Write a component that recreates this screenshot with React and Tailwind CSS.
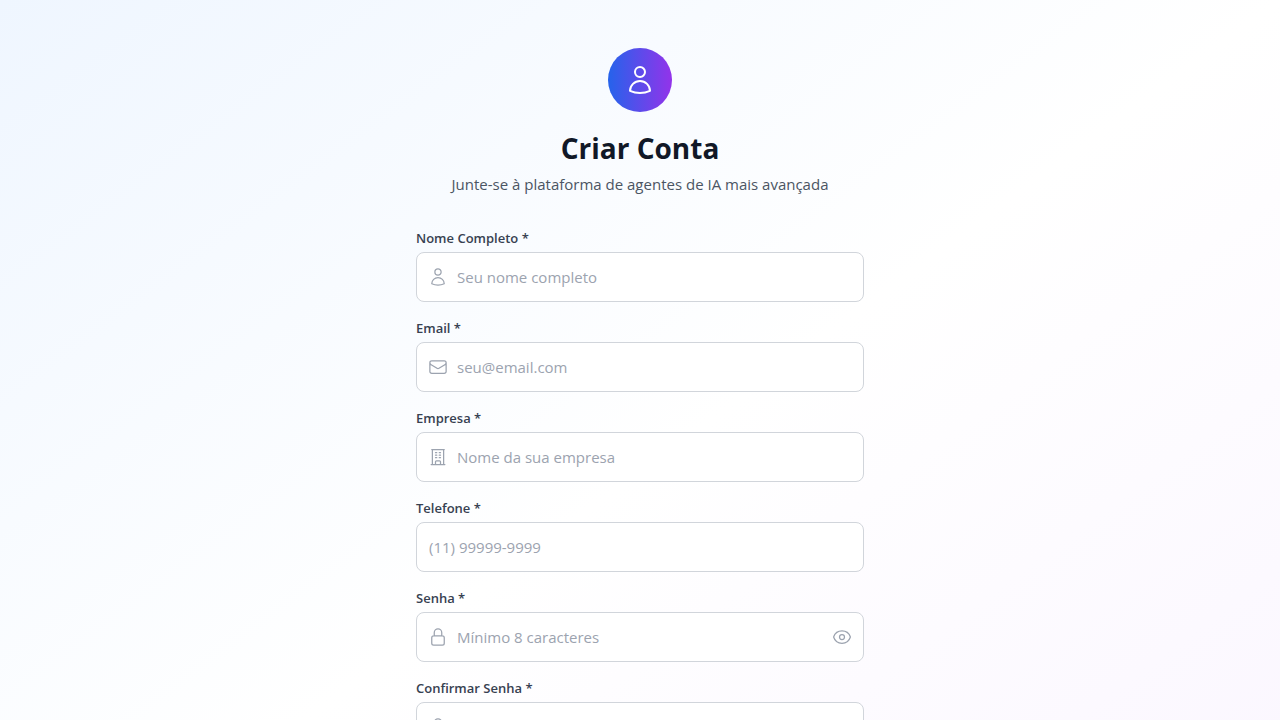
import { useState } from "react";
import {
  HiOutlineBuildingOffice,
  HiOutlineEnvelope,
  HiOutlineEye,
  HiOutlineEyeSlash,
  HiOutlineLockClosed,
  HiOutlineUser,
} from "react-icons/hi2";

function Field({ id, label, icon: Icon, type = "text", placeholder, autoComplete }) {
  const [visible, setVisible] = useState(false);
  const isPassword = type === "password";
  const Toggle = visible ? HiOutlineEyeSlash : HiOutlineEye;

  return (
    <div className="flex flex-col gap-1">
      <label htmlFor={id} className="text-[13px] leading-5 font-semibold text-[#374151]">
        {label} *
      </label>
      <div className="relative flex">
        {Icon && (
          <Icon
            className="pointer-events-none absolute inset-y-0 left-3 my-auto size-5 text-[#9ca3af]"
            aria-hidden="true"
          />
        )}
        <input
          id={id}
          name={id}
          type={isPassword && visible ? "text" : type}
          placeholder={placeholder}
          autoComplete={autoComplete}
          required
          className={`w-full min-w-0 rounded-lg border border-[#d1d5db] bg-white py-3 text-[15px] leading-6 text-[#111827] outline-none placeholder:text-[#9ca3af] focus:border-[#2563eb] ${Icon ? "pl-10" : "pl-3"} ${isPassword ? "pr-10" : "pr-3"}`}
        />
        {isPassword && (
          <button
            type="button"
            onClick={() => setVisible(!visible)}
            aria-label={visible ? "Ocultar senha" : "Mostrar senha"}
            className="absolute inset-y-0 right-3 text-[#9ca3af]"
          >
            <Toggle className="size-5" aria-hidden="true" />
          </button>
        )}
      </div>
    </div>
  );
}

export default function App() {
  return (
    <main className="min-h-screen bg-linear-to-br/srgb from-[#eff6ff] via-white to-[#faf5ff] px-4 pt-12 pb-48 font-['Segoe_UI','Open_Sans',sans-serif]">
      <div className="mx-auto flex w-full max-w-md flex-col gap-8">
        <header className="flex flex-col items-center text-center">
          <div className="mb-4 flex size-16 items-center justify-center rounded-full bg-linear-to-r/srgb from-[#2563eb] to-[#9333ea]">
            <HiOutlineUser className="size-8 text-white" aria-hidden="true" />
          </div>
          <h1 className="mb-1 text-[28px] leading-10 font-bold text-[#111827]">Criar Conta</h1>
          <p className="text-[15px] leading-6 text-[#4b5563]">
            Junte-se à plataforma de agentes de IA mais avançada
          </p>
        </header>

        <form className="flex flex-col gap-4" onSubmit={(event) => event.preventDefault()}>
          <Field id="name" label="Nome Completo" icon={HiOutlineUser} placeholder="Seu nome completo" autoComplete="name" />
          <Field id="email" label="Email" icon={HiOutlineEnvelope} type="email" placeholder="seu@email.com" autoComplete="email" />
          <Field id="company" label="Empresa" icon={HiOutlineBuildingOffice} placeholder="Nome da sua empresa" autoComplete="organization" />
          <Field id="phone" label="Telefone" type="tel" placeholder="(11) 99999-9999" autoComplete="tel" />
          <Field id="password" label="Senha" icon={HiOutlineLockClosed} type="password" placeholder="Mínimo 8 caracteres" autoComplete="new-password" />
          <Field id="confirm-password" label="Confirmar Senha" icon={HiOutlineLockClosed} type="password" autoComplete="new-password" />
        </form>
      </div>
    </main>
  );
}
